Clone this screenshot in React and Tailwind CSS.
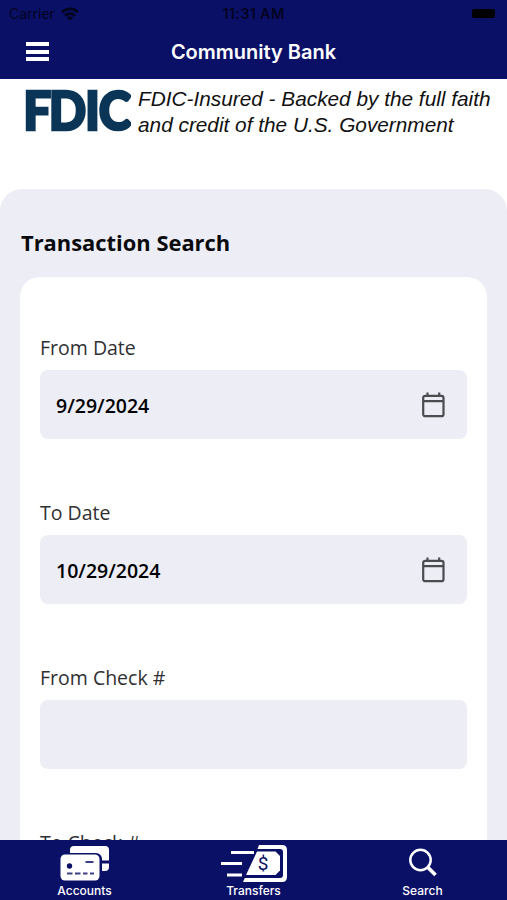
const FIELDS = [
  { label: "From Date", value: "9/29/2024", date: true },
  { label: "To Date", value: "10/29/2024", date: true },
  { label: "From Check #", value: "" },
  { label: "To Check #", value: "" },
];

function WifiIcon() {
  return (
    <svg width="18" height="14" viewBox="0 0 18 14" fill="none" stroke="#03041f" strokeWidth="2.8">
      <path d="M1 5.2a11.4 11.4 0 0 1 16 0" />
      <path d="M4 8.700a7.200 7.200 0 0 1 10 0" />
      <path d="M9 13.400 6 10.800a4.300 4.300 0 0 1 6 0Z" fill="#03041f" stroke="none" />
    </svg>
  );
}

function CalendarIcon() {
  return (
    <svg width="24" height="26" viewBox="0 0 24 26" fill="none" stroke="#4b4b50" strokeWidth="2.2">
      <rect x="2.200" y="3.800" width="20.300" height="20.400" rx="2" />
      <path d="M2 9.200h20.500M6.500 .5v3.500M18.200 .5v3.500" />
    </svg>
  );
}

function AccountsIcon() {
  return (
    <svg width="52" height="36" viewBox="0 0 52 36">
      <rect x="11" y="1" width="39" height="25" rx="4" fill="#fff" />
      <path d="M40 15.500h12v3H40z" fill="#0b1067" />
      <rect x="0" y="8" width="43" height="29" rx="6" fill="#0b1067" />
      <rect x="1.500" y="9.500" width="39" height="26" rx="4.500" fill="#fff" />
      <circle cx="10.500" cy="21" r="2.700" fill="#0b1067" />
      <path d="M26.500 17h8M8 28.500h5.500M16 28.500h5.500M24 28.500h4.500M31 28.500h4" stroke="#3b3f86" strokeWidth="2" />
    </svg>
  );
}

function TransfersIcon() {
  return (
    <svg width="68" height="38" viewBox="0 0 68 38">
      <path d="M11 8.500h23M1 19.500h21M7 31h15" stroke="#fff" strokeWidth="3" />
      <path d="M39 1h23q5 0 5 5v27q0 5-5 5H23l1.800-4H60q3 0 3-3V8q0-3-3-3H37.500Z" fill="#fff" />
      <path d="M37 7.500h18.500l4.500 4.500v14.500L55.500 31H26Z" fill="#fff" />
      <text x="43" y="26" textAnchor="middle" fontFamily="Roboto, sans-serif" fontSize="19" fill="#0b1067">$</text>
    </svg>
  );
}

function SearchIcon() {
  return (
    <svg width="28" height="29" viewBox="0 0 28 29" fill="none" stroke="#fff">
      <circle cx="11.500" cy="12" r="10.200" strokeWidth="2.500" />
      <path d="m18.500 19 8 8" strokeWidth="3.800" />
    </svg>
  );
}

const TABS = [
  { label: "Accounts", icon: <AccountsIcon /> },
  { label: "Transfers", icon: <TransfersIcon /> },
  { label: "Search", icon: <SearchIcon /> },
];

function Header() {
  return (
    <header className="h-[79px] shrink-0 bg-[#0b1067] font-[Inter,sans-serif]">
      <div className="grid h-[27px] grid-cols-3 items-center px-[9px] text-[#03041f]">
        <div className="flex items-center gap-1.5">
          <span className="text-[14px]">Carrier</span>
          <WifiIcon />
        </div>
        <span className="text-center text-[14.500px] font-semibold tracking-[0.3px]">11:31 AM</span>
        <div className="mr-[3px] h-[9px] w-[23px] justify-self-end rounded-xs bg-black" />
      </div>
      <div className="grid h-[49px] grid-cols-[74px_1fr_74px] items-center">
        <button className="ml-[26px] flex w-[23px] flex-col gap-[3.500px]" aria-label="Menu">
          <span className="h-1 w-full bg-white" />
          <span className="h-1 w-full bg-white" />
          <span className="h-1 w-full bg-white" />
        </button>
        <h1 className="text-center text-[20px] font-semibold text-white">Community Bank</h1>
      </div>
    </header>
  );
}

function FdicBanner() {
  return (
    <div className="flex h-[110px] shrink-0 items-start bg-white pt-[7px] pl-[22px]">
      {/* the C is trimmed flat by the right edge of the svg */}
      <svg width="109" height="70" viewBox="0 0 109 70" className="mr-[3px] shrink-0">
        <text x="1.4 28.8 67.7 82.5" y="44.2" transform="scale(0.93 1)" fontFamily="Lato, sans-serif" fontWeight="900" fontSize="53" fill="#0b3556" stroke="#0b3556" strokeWidth="2.6">FDIC</text>
      </svg>
      <p className="ml-1 font-['Liberation_Sans',Arial,sans-serif] text-[20.800px] leading-[26px] whitespace-nowrap text-[#111] italic">
        FDIC-Insured - Backed by the full faith
        <br />
        and credit of the U.S. Government
      </p>
    </div>
  );
}

function Field({ label, value, date }) {
  return (
    <div className="mb-[60px]">
      <div className="h-[36px] text-[19.500px] leading-[27px] text-[#303033]">{label}</div>
      <div className="flex h-[69px] items-center justify-between rounded-[8px] bg-[#ecedf5] pr-[22px] pl-4">
        <span className="pt-0.5 text-[19.500px] font-semibold text-black">{value}</span>
        {date && <CalendarIcon />}
      </div>
    </div>
  );
}

export default function App() {
  return (
    <div className="flex h-[900px] w-[507px] flex-col overflow-hidden bg-white font-['Open_Sans',sans-serif]">
      <Header />
      <FdicBanner />
      <main className="min-h-0 flex-1 overflow-hidden rounded-t-[22px] bg-[#ecedf5] px-5">
        <h2 className="mt-[39px] h-[49px] pl-px text-[21.900px] leading-[30px] font-bold text-[#0a0a0d]">Transaction Search</h2>
        <div className="h-[700px] rounded-[20px] bg-white px-5 pt-[57px]">
          {FIELDS.map((f) => <Field key={f.label} {...f} />)}
        </div>
      </main>
      <nav className="grid h-[60px] shrink-0 grid-cols-3 bg-[#0b1067]">
        {TABS.map((t) => (
          <div key={t.label} className="flex flex-col items-center">
            <div className="flex h-[45px] items-center">{t.icon}</div>
            <span className="font-[Inter,sans-serif] text-[12px] leading-[12px] font-medium text-white">{t.label}</span>
          </div>
        ))}
      </nav>
    </div>
  );
}
